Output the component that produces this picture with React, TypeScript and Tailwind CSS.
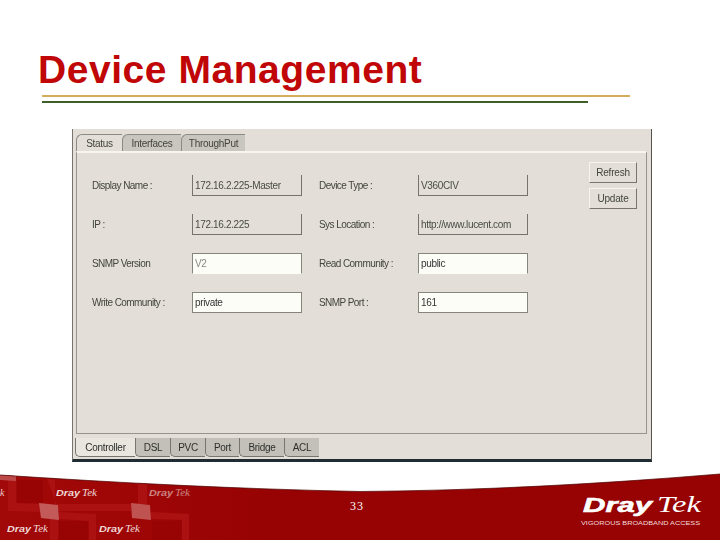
const ui = { fontFamily: '"Liberation Sans", Arial, sans-serif' };
const sans = { fontFamily: '"Liberation Sans", sans-serif' };
const serif = { fontFamily: '"Liberation Serif", serif' };

function Field({ label, value, editable, muted, open }: { label: string; value: string; editable?: boolean; muted?: boolean; open?: boolean }) {
  return (
    <div className="contents">
      <div className="flex items-center text-[10px] tracking-[-0.55px] text-[#44443f]">{label}</div>
      <div
        className={
          editable
            ? `flex h-[21px] items-center border border-[#85857c] bg-[#fdfdf8] pl-[2px] text-[10px] tracking-[-0.35px] ${open ? 'border-b-[#fdfdf8]' : ''} ${muted ? 'text-[#8a8a84]' : 'text-[#333]'}`
            : 'flex h-[21px] items-center border-x border-b border-[#77736c] pl-[2px] text-[10px] tracking-[-0.35px] text-[#4a4a46]'
        }
      >
        {value}
      </div>
    </div>
  );
}

function TopTab({ label, active, w }: { label: string; active?: boolean; w: string }) {
  return (
    <div
      className={`${w} flex h-[17px] items-center justify-center rounded-tl-[6px] border-t border-l border-[#8c8a82] text-[10px] tracking-[-0.3px] text-[#44443f] ${active ? 'bg-[#e3dfd8]' : 'bg-[#c8c6be]'}`}
    >
      {label}
    </div>
  );
}

function BottomTab({ label, active, w }: { label: string; active?: boolean; w: string }) {
  return (
    <div
      className={`${w} flex h-[19px] items-center justify-center rounded-bl-[5px] border-b border-l border-[#77756e] text-[10px] tracking-[-0.3px] text-[#2e2e2c] ${active ? 'bg-[#e9e6df]' : 'bg-[#c2c0b8]'}`}
    >
      {label}
    </div>
  );
}

function Mark({ x, y, o = 0.85 }: { x: number; y: number; o?: number }) {
  return (
    <g fill="#fff" fillOpacity={o}>
      <text x={x} y={y} fontSize="9" fontWeight="700" fontStyle="italic" textLength="24" lengthAdjust="spacingAndGlyphs" style={sans}>Dray</text>
      <text x={x + 26} y={y} fontSize="10" fontStyle="italic" textLength="15" lengthAdjust="spacingAndGlyphs" style={serif}>Tek</text>
    </g>
  );
}

const EDGE = 'M0 475 C120 483 240 489 360 491.5 C480 490.5 600 484 720 474';

function Footer() {
  return (
    <div className="relative mt-auto h-[72px] w-full" style={ui}>
      <svg viewBox="0 468 720 72" width="720" height="72" className="block">
        <defs>
          <clipPath id="band">
            <path d={`${EDGE} L720 540 L0 540 Z`} />
          </clipPath>
          <linearGradient id="wash" x1="0" x2="1" y1="0" y2="0">
            <stop offset="0" stopColor="#a10808" />
            <stop offset="0.2" stopColor="#9e0606" />
            <stop offset="0.38" stopColor="#970202" />
            <stop offset="1" stopColor="#970202" />
          </linearGradient>
        </defs>
        <path d={`${EDGE} L720 540 L0 540 Z`} fill="url(#wash)" />
        <g clipPath="url(#band)">
          <g fill="#ab1111">
            <path d="M8 470 L16 470 L16 503 L40 504 L40 512 L8 511 Z" />
            <path d="M44 470 L55 470 L55 504 L131 504 L131 511 L59 511 Z" />
            <path d="M59 512 L96 514 L96 540 L89 540 L89 521 L59 519 Z" />
            <path d="M50 519 L58 519 L58 540 L50 540 Z" />
            <path d="M138 470 L147 470 L147 504 L138 504 Z" />
            <path d="M151 512 L189 514 L189 540 L182 540 L182 520 L151 519 Z" />
          </g>
          <g fill="#980303">
            <rect x="17" y="480" width="26" height="23" />
            <rect x="59" y="521" width="29" height="19" />
            <rect x="152" y="521" width="29" height="19" />
          </g>
          <path d="M39 503 L58 505 L59 520 L41 518 Z" fill="#c25a59" />
          <path d="M131 503 L150 505 L151 520 L132 518 Z" fill="#bf5352" />
          <path d="M0 474 L16 476 L16 481 L0 480 Z" fill="#bd4a4a" />
        </g>
        <path d={EDGE} fill="none" stroke="#4a0606" strokeWidth="0.7" />
        <text x={0} y={496} fill="#fff" fillOpacity={0.8} fontSize="10" fontStyle="italic" style={serif}>k</text>
        <Mark x={56} y={496} />
        <Mark x={149} y={496} o={0.5} />
        <Mark x={7} y={532} />
        <Mark x={99} y={532} />
        <text x={583} y={512} fill="#fff" stroke="#fff" strokeWidth="0.6" fontSize="21" fontWeight="700" fontStyle="italic" textLength="69" lengthAdjust="spacingAndGlyphs" style={sans}>Dray</text>
        <text x={657} y={512} fill="#fff" fontSize="23" fontStyle="italic" textLength="44" lengthAdjust="spacingAndGlyphs" style={serif}>Tek</text>
        <text x={581} y={525} fill="#f3dcdc" fontSize="5.5" textLength="119" lengthAdjust="spacingAndGlyphs" style={sans}>VIGOROUS BROADBAND ACCESS</text>
      </svg>
      <span className="absolute left-[350px] top-[29px] text-[12px] tracking-[1px] text-white" style={serif}>33</span>
    </div>
  );
}

export default function App() {
  return (
    <div className="flex h-[540px] w-[720px] flex-col overflow-hidden bg-white" style={ui}>
      <h1 className="ml-[38px] mt-[49px] text-[39px] font-bold leading-[42px] tracking-[0.55px] text-[#c00606]">Device Management</h1>

      <div className="ml-[42px] mt-[4px] h-[2px] w-[588px] bg-[#d6ad5c]" />
      <div className="ml-[42px] mt-[4px] h-[2px] w-[546px] bg-[#3f5f2a]" />

      <div className="ml-[72px] mt-[26px] flex h-[333px] w-[580px] flex-col border-l border-r border-b-[3px] border-l-[#77756e] border-r-[#55534e] border-b-[#1f2d33] bg-[#e3dfd8] pl-[3px] pr-[4px] pt-[5px] [filter:blur(0.3px)]">
        <div className="flex">
          <TopTab label="Status" active w="w-[46px]" />
          <TopTab label="Interfaces" w="w-[59px]" />
          <TopTab label="ThroughPut" w="w-[64px]" />
        </div>
        <div className="relative flex h-[283px] border border-t-2 border-[#96948c] border-t-[#f7f5ef]">
          <div className="ml-[15px] mt-[22px] grid h-fit grid-cols-[100px_110px_17px_99px_110px] gap-y-[18px]">
            <Field label="Display Name :" value="172.16.2.225-Master" />
            <div />
            <Field label="Device Type :" value="V360CIV" />
            <Field label="IP :" value="172.16.2.225" />
            <div />
            <Field label="Sys Location :" value="http://www.lucent.com" />
            <Field label="SNMP Version" value="V2" editable muted open />
            <div />
            <Field label="Read Community :" value="public" editable open />
            <Field label="Write Community :" value="private" editable />
            <div />
            <Field label="SNMP Port :" value="161" editable />
          </div>
          <div className="absolute left-[512px] top-[9px] flex flex-col gap-[5px]">
            <button className="h-[21px] w-[48px] border border-[#77756e] border-l-[#f7f5ef] border-t-[#f7f5ef] text-[10px] tracking-[-0.2px] text-[#44443f]">Refresh</button>
            <button className="h-[21px] w-[48px] border border-[#77756e] border-l-[#f7f5ef] border-t-[#f7f5ef] text-[10px] tracking-[-0.2px] text-[#44443f]">Update</button>
          </div>
        </div>
        <div className="-ml-[1px] mt-[4px] flex">
          <BottomTab label="Controller" active w="w-[60px]" />
          <BottomTab label="DSL" w="w-[35px]" />
          <BottomTab label="PVC" w="w-[35px]" />
          <BottomTab label="Port" w="w-[34px]" />
          <BottomTab label="Bridge" w="w-[45px]" />
          <BottomTab label="ACL" w="w-[35px]" />
        </div>
      </div>

      <Footer />
    </div>
  );
}
